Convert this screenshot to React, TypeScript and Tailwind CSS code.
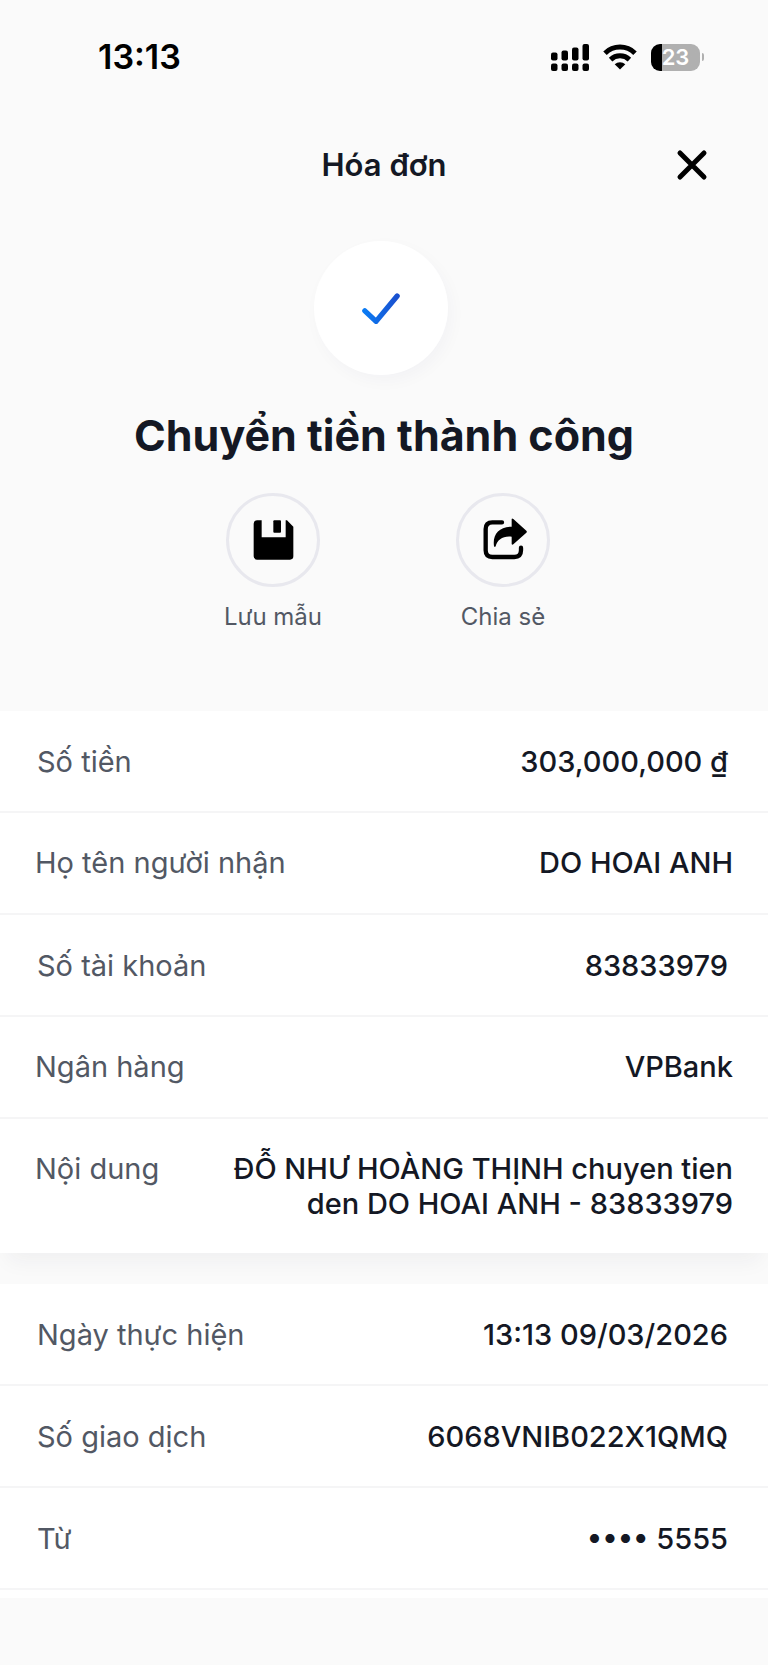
import React from 'react';

type Detail = {
  label: string;
  value: string;
  inset?: boolean;
};

const recipientDetails: Detail[] = [
  { label: 'Số tiền', value: '303,000,000 ₫', inset: true },
  { label: 'Họ tên người nhận', value: 'DO HOAI ANH' },
  { label: 'Số tài khoản', value: '83833979', inset: true },
  { label: 'Ngân hàng', value: 'VPBank' },
  { label: 'Nội dung', value: 'ĐỖ NHƯ HOÀNG THỊNH chuyen tien den DO HOAI ANH - 83833979' }
];

const transactionDetails: Detail[] = [
  { label: 'Ngày thực hiện', value: '13:13 09/03/2026', inset: true },
  { label: 'Số giao dịch', value: '6068VNIB022X1QMQ', inset: true },
  { label: 'Từ', value: '•••• 5555', inset: true }
];

const SignalIcon = () => (
  <svg viewBox="0 0 38 27" className="w-[38px] h-[27px]" fill="#000">
    <rect x="0" y="8.5" width="6.5" height="8" rx="2" />
    <rect x="10.5" y="6.5" width="6.5" height="10" rx="2" />
    <rect x="21" y="3.5" width="6.5" height="13" rx="2" />
    <rect x="31.5" y="0" width="6.5" height="16.5" rx="2" />
    <rect x="0" y="19.5" width="6.5" height="7.5" rx="2" />
    <rect x="10.5" y="19.5" width="6.5" height="7.5" rx="2" />
    <rect x="21" y="19.5" width="6.5" height="7.5" rx="2" />
    <rect x="31.5" y="19.5" width="6.5" height="7.5" rx="2" />
  </svg>
);

const WifiIcon = () => (
  <svg viewBox="0 0 34 26" className="w-[34px] h-[26px]">
    <path d="M2 9.2a21.5 21.5 0 0 1 30 0" fill="none" stroke="#000" strokeWidth="5" />
    <path d="M7.6 15.6a13.6 13.6 0 0 1 18.8 0" fill="none" stroke="#000" strokeWidth="5" />
    <path d="M17 25.5l-5.3-5.2a7.6 7.6 0 0 1 10.6 0z" fill="#000" />
  </svg>
);

const StatusBar = () => (
  <div className="flex h-[114px] items-center justify-between pl-[98px] pr-16 text-black">
    <span className="text-[34px] leading-10 font-semibold">13:13</span>
    <div className="flex items-center">
      <SignalIcon />
      <div className="ml-3.5">
        <WifiIcon />
      </div>
      <div className="ml-3.5 flex items-center gap-0.5">
        <div className="flex h-[27px] w-[49px] items-center justify-center rounded-[9px] bg-linear-to-r from-black from-[22%] to-[#b0b0b0] to-[22%] text-[22px] leading-none font-semibold text-white">
          23
        </div>
        <div className="h-2 w-0.5 rounded-r-full bg-[#b0b0b0]"></div>
      </div>
    </div>
  </div>
);

const SaveIcon = () => (
  <svg viewBox="0 0 264 264" className="size-full">
    <path
      d="M84 73H98V124H170V73H174L193 92V181Q193 191 183 191H84Q74 191 74 181V83Q74 73 84 73Z"
      fill="#000"
    />
    <rect x="133" y="73" width="23" height="37" rx="3" fill="#000" />
  </svg>
);

const ShareIcon = () => (
  <svg viewBox="0 0 264 264" className="size-full">
    <path
      d="M129 79H100Q80 79 80 99V163Q80 183 100 183H166Q186 183 186 163V155"
      fill="none"
      stroke="#000"
      strokeWidth="13"
      strokeLinecap="round"
    />
    <path
      d="M158 69Q159 66 163 69L202 104Q205 107 202 110L163 145Q159 148 158 144V122C132 119 115 131 110 151Q107 155 105 150C100 116 120 92 158 92Z"
      fill="#000"
    />
  </svg>
);

const DetailRow = ({ label, value, inset }: Detail) => (
  <div
    className={`flex min-h-[102px] justify-between gap-14 border-b-2 border-[#f5f5f6] text-[29px] leading-[35px] ${
      inset ? 'pt-[33px] pb-[31px] pl-[37px] pr-10' : 'px-[35px] py-8'
    }`}
  >
    <dt className="shrink-0 text-[#525864]">{label}</dt>
    <dd className="text-right font-medium text-[#141824]">{value}</dd>
  </div>
);

const App = () => {
  const actions = [
    { label: 'Lưu mẫu', icon: <SaveIcon /> },
    { label: 'Chia sẻ', icon: <ShareIcon /> }
  ];

  return (
    <main className="min-h-screen bg-[#fafafa] font-[Inter,'Noto_Sans',sans-serif]">
      <StatusBar />

      <header className="grid h-[102px] grid-cols-3 items-center px-[60px]">
        <h1 className="col-start-2 text-center text-[31px] leading-10 font-semibold text-[#141824]">Hóa đơn</h1>
        <button type="button" aria-label="Đóng" className="justify-self-end cursor-pointer">
          <svg viewBox="0 0 32 32" className="size-8" fill="none" stroke="#000" strokeWidth="5" strokeLinecap="round">
            <path d="M4 4l24 24M28 4L4 28" />
          </svg>
        </button>
      </header>

      {/* Result */}
      <section className="flex flex-col items-center pt-[25px] pb-[79px]">
        <div className="mr-1.5 flex size-[134px] items-center justify-center rounded-full bg-white shadow-[4px_6px_16px_rgba(30,30,80,0.03)]">
          <svg viewBox="0 0 114 94" className="h-[31px] w-[38px]" fill="none">
            <defs>
              <linearGradient id="check" x1="0" y1="0" x2="1" y2="0">
                <stop offset="0" stopColor="#0b7bf3" />
                <stop offset="1" stopColor="#1a50cf" />
              </linearGradient>
            </defs>
            <path
              d="M8 54L42 86L106 9"
              stroke="url(#check)"
              strokeWidth="16"
              strokeLinecap="round"
              strokeLinejoin="round"
            />
          </svg>
        </div>

        <h2 className="mt-8 text-center text-[43px] leading-[56px] font-bold text-[#141824]">Chuyển tiền thành công</h2>

        <div className="mt-[30px] flex gap-[130px] pl-2">
          {actions.map((action) => (
            <button key={action.label} type="button" className="flex w-[100px] flex-col items-center cursor-pointer">
              <span className="size-[94px] rounded-full border-3 border-[#e8e8ee]">{action.icon}</span>
              <span className="mt-[15px] whitespace-nowrap text-[24px] leading-[30px] text-[#525864]">
                {action.label}
              </span>
            </button>
          ))}
        </div>
      </section>

      {/* Details */}
      <div className="flex flex-col gap-[31px]">
        <dl className="bg-white shadow-[0_16px_20px_-8px_rgba(30,30,60,0.05)] *:last:border-b-0">
          {recipientDetails.map((detail) => (
            <DetailRow key={detail.label} {...detail} />
          ))}
        </dl>
        <dl className="relative bg-white pb-2">
          {transactionDetails.map((detail) => (
            <DetailRow key={detail.label} {...detail} />
          ))}
        </dl>
      </div>
    </main>
  );
};

export default App;
